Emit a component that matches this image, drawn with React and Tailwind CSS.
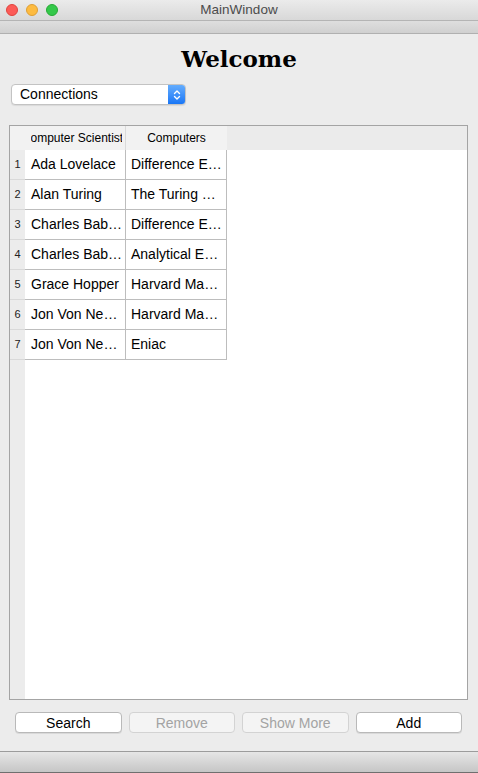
import React from 'react';

const ROWS = [
  ['Ada Lovelace', 'Difference E…'],
  ['Alan Turing', 'The Turing …'],
  ['Charles Bab…', 'Difference E…'],
  ['Charles Bab…', 'Analytical E…'],
  ['Grace Hopper', 'Harvard Ma…'],
  ['Jon Von Ne…', 'Harvard Ma…'],
  ['Jon Von Ne…', 'Eniac'],
];

const sans = { fontFamily: '"Liberation Sans", Arial, sans-serif' };

function TrafficLight({ color, ring }) {
  return <span className={`h-[12px] w-[12px] rounded-full border ${color} ${ring}`} />;
}

function Button({ label, disabled }) {
  return (
    <button
      type="button"
      disabled={disabled}
      className={`flex-1 h-[21px] rounded-[4px] border text-[14px] leading-none flex items-center justify-center ${
        disabled
          ? 'bg-[#f4f4f4] border-[#d3d3d3] text-[#a3a3a3]'
          : 'bg-white border-[#b9b9b9] text-black shadow-[0_1px_0_rgba(0,0,0,0.08)]'
      }`}
    >
      {label}
    </button>
  );
}

export default function App() {
  return (
    <div className="h-[773px] w-[478px] flex flex-col bg-[#ececec] overflow-hidden" style={sans}>
      {/* title bar */}
      <div className="relative h-[21px] shrink-0 flex items-center bg-gradient-to-b from-[#ebebeb] to-[#d8d8d8] border-b border-[#b4b4b4]">
        <div className="flex items-center gap-[8px] pl-[6px]">
          <TrafficLight color="bg-[#fc5b57]" ring="border-[#e0443e]" />
          <TrafficLight color="bg-[#fdbb40]" ring="border-[#de9f34]" />
          <TrafficLight color="bg-[#34c84a]" ring="border-[#27aa35]" />
        </div>
        <span className="absolute inset-0 flex items-center justify-center text-[13.5px] text-[#4c4c4c]">
          MainWindow
        </span>
      </div>

      {/* toolbar strip */}
      <div className="h-[13px] shrink-0 bg-gradient-to-b from-[#dedede] to-[#d0d0d0] border-b border-[#b0b0b0]" />

      {/* content */}
      <div className="flex-1 flex flex-col">
        <h1
          className="mt-[10px] h-[30px] leading-[30px] text-center text-[23px] font-bold text-black"
          style={{ fontFamily: '"DejaVu Serif", Georgia, serif' }}
        >
          Welcome
        </h1>

        {/* combobox */}
        <div className="mt-[10px] ml-[11px] w-[175px] h-[21px] flex rounded-[4px] border border-[#c3c3c3] bg-white shadow-[0_1px_1px_rgba(0,0,0,0.08)] overflow-hidden">
          <span className="flex-1 pl-[8px] text-[14px] leading-[19px] text-black">Connections</span>
          <span className="w-[17px] flex items-center justify-center bg-gradient-to-b from-[#63acfd] to-[#1776f6]">
            <svg width="8" height="12" viewBox="0 0 8 12" fill="none" stroke="white" strokeWidth="1.4" strokeLinecap="round" strokeLinejoin="round">
              <path d="M1.5 4.5 L4 2 L6.5 4.5" />
              <path d="M1.5 7.5 L4 10 L6.5 7.5" />
            </svg>
          </span>
        </div>

        {/* table */}
        <div className="mt-[20px] ml-[9px] w-[459px] h-[575px] border border-[#a4a4a4] bg-white flex flex-col">
          <div className="h-[24px] flex shrink-0 text-[12px] text-black">
            <div className="w-[15px] bg-[#f2f2f2]" />
            <div className="w-[101px] bg-[#f2f2f2] border-r border-[#dadada] flex items-center">
              <div className="ml-[6px] w-[91px] overflow-hidden">
                <div className="ml-[-9px] w-[101px] flex justify-center">
                  <span className="whitespace-nowrap">Computer Scientist</span>
                </div>
              </div>
            </div>
            <div className="w-[101px] bg-[#f2f2f2] flex items-center justify-center">Computers</div>
            <div className="flex-1 bg-[#ebebeb]" />
          </div>

          <div className="flex-1 flex">
            <div className="w-[15px] bg-[#ececec] flex flex-col">
              {ROWS.map((_, i) => (
                <div
                  key={i}
                  className="h-[30px] flex items-center justify-center text-[11px] text-[#222] border-b border-[#d9d9d9]"
                >
                  {i + 1}
                </div>
              ))}
            </div>
            <div className="flex flex-col">
              {ROWS.map((r, i) => (
                <div key={i} className="h-[30px] flex text-[14px] text-black">
                  <div className="w-[101px] border-r border-b border-[#bdbdbd] pl-[6px] flex items-center whitespace-nowrap overflow-hidden">
                    {r[0]}
                  </div>
                  <div className="w-[101px] border-r border-b border-[#bdbdbd] pl-[5px] flex items-center whitespace-nowrap overflow-hidden">
                    {r[1]}
                  </div>
                </div>
              ))}
            </div>
          </div>
        </div>

        {/* buttons */}
        <div className="mt-[12px] mr-[16px] ml-[15px] flex gap-[7px]">
          <Button label="Search" />
          <Button label="Remove" disabled />
          <Button label="Show More" disabled />
          <Button label="Add" />
        </div>
      </div>

      {/* status bar */}
      <div className="h-[22px] shrink-0 border-t border-[#9c9c9c] border-b border-b-[#6f6f6f] bg-gradient-to-b from-[#e6e6e6] to-[#c6c6c6]" />
    </div>
  );
}
